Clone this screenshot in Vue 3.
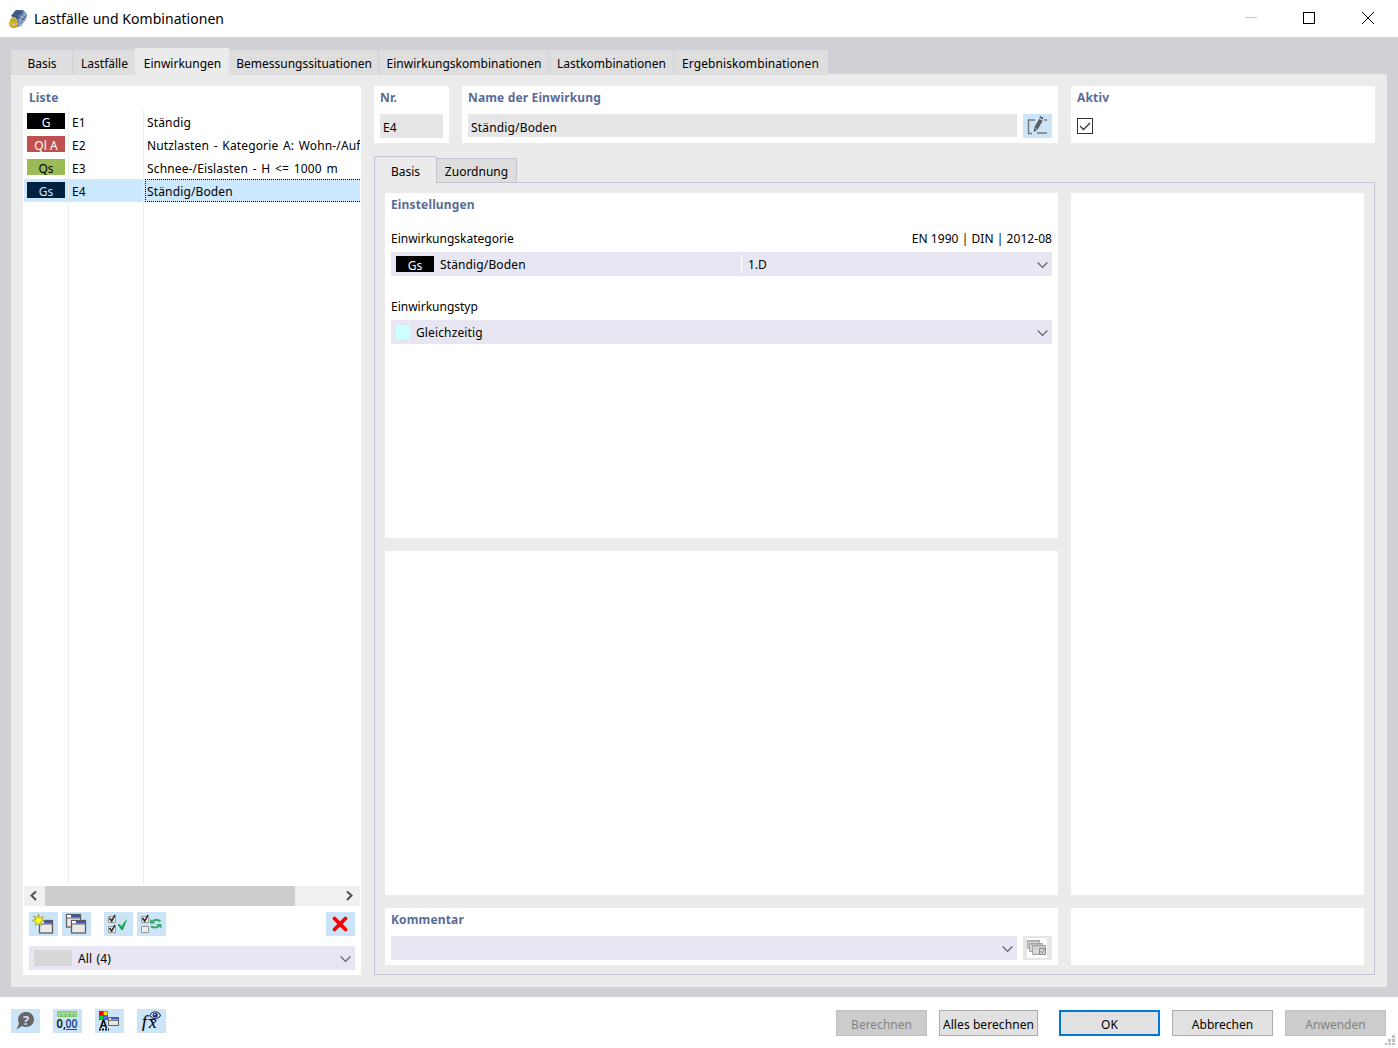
<script setup>
import { ref } from "vue";

const tabs = [
  { label: "Basis", width: 62 },
  { label: "Lastfälle", width: 62 },
  { label: "Einwirkungen", width: 94 },
  { label: "Bemessungssituationen", width: 150 },
  { label: "Einwirkungskombinationen", width: 170 },
  { label: "Lastkombinationen", width: 125 },
  { label: "Ergebniskombinationen", width: 154 },
];
const activeTab = ref(2);

const actions = [
  { tag: "G", nr: "E1", name: "Ständig", bg: "#000000", fg: "#ffffff" },
  { tag: "Ql A", nr: "E2", name: "Nutzlasten - Kategorie A: Wohn-/Auf", bg: "#c0504d", fg: "#ffffff" },
  { tag: "Qs", nr: "E3", name: "Schnee-/Eislasten - H <= 1000 m", bg: "#9bbb59", fg: "#000000" },
  { tag: "Gs", nr: "E4", name: "Ständig/Boden", bg: "#00213f", fg: "#cce8ff" },
];
const selected = ref(3);
const active = ref(true);
</script>

<template>
  <div class="window">
    <header class="titlebar">
      <svg class="app-icon" width="20" height="20" viewBox="0 0 20 20">
        <path d="M3 7 L8 1 L15 1 L19 5 L18 10 L13 17 L9 18 L9 11 Z" fill="#6580b4" />
        <path d="M3 7 L8 1 L15 1 L10 7 L9 11 L6 8 Z" fill="#47618f" />
        <path d="M12 8 L16 4 L19 5 L18 10 L13 17 L10 16 Z" fill="#9dafd0" />
        <path d="M6 4l9 1M5 6l7 3M11 2l-4 6M14 2l-5 8M18 6l-6 9M12 9l5 2M14 6l4 3" stroke="#344b7b" stroke-width=".7" />
        <path d="M8 9.800C5.500 8.800 2.800 11 2.800 14.300c0 4.200 6 4 6 .7 0-3-4.500-3-5.800-.3" fill="none" stroke="#9a7911" stroke-width="3" />
        <path d="M8 9.800C5.500 8.800 2.800 11 2.800 14.300c0 4.200 6 4 6 .7 0-3-4.500-3-5.800-.3" fill="none" stroke="#e4bd31" stroke-width="1.800" />
      </svg>
      <h1>Lastfälle und Kombinationen</h1>
      <svg class="window-controls" width="140" height="20" viewBox="0 0 140 20" fill="none" shape-rendering="crispEdges">
        <path d="M3 9.500h12" stroke="#c8c8c8" />
        <path d="M61.500 4.500h11v11h-11z" stroke="#000" />
        <path d="M120 4l12 12M132 4l-12 12" stroke="#000" shape-rendering="auto" />
      </svg>
    </header>

    <main class="workspace">
      <nav class="main-tabs">
        <button
          v-for="(tab, i) in tabs"
          :key="tab.label"
          type="button"
          class="main-tab"
          :class="{ active: i === activeTab }"
          :style="{ width: tab.width + 'px' }"
          @click="activeTab = i"
        >
          {{ tab.label }}
        </button>
      </nav>

      <div class="page">
        <aside class="panel list-panel">
          <h2>Liste</h2>
          <div class="list">
            <div
              v-for="(item, i) in actions"
              :key="item.nr"
              class="row"
              :class="{ selected: i === selected }"
              @click="selected = i"
            >
              <span class="cell tag-cell">
                <span class="tag" :style="{ background: item.bg, color: item.fg }">{{ item.tag }}</span>
              </span>
              <span class="cell nr-cell">{{ item.nr }}</span>
              <span class="cell name-cell">{{ item.name }}</span>
            </div>
            <div class="row filler">
              <span class="cell tag-cell"></span>
              <span class="cell nr-cell"></span>
              <span class="cell name-cell"></span>
            </div>
          </div>
          <div class="scrollbar">
            <svg width="21" height="20" viewBox="0 0 21 20" fill="none">
              <path d="M12 5.500L7.500 9.500l4.500 4.500" stroke="#505050" stroke-width="2" />
            </svg>
            <div class="thumb"></div>
            <svg class="scroll-right" width="21" height="20" viewBox="0 0 21 20" fill="none">
              <path d="M8 5.500l4.500 4-4.500 4.500" stroke="#505050" stroke-width="2" />
            </svg>
          </div>
          <div class="toolbar">
            <button type="button" class="tool">
              <svg width="29" height="24" viewBox="0 0 29 24">
                <rect x="10.500" y="8.500" width="13" height="12.500" fill="#e9e9e9" stroke="#5c5c5c" stroke-width="1.300" />
                <path d="M11 9h4v2h-4z" fill="#fff" />
                <path d="M15 9h8v2.500h-8z" fill="#3f51bd" />
                <path d="M10 12h14" stroke="#626262" />
                <path d="M9.500 2l1.200 4 3.800-1.500-2 3.300 3 1.200-3.800 1 .8 3.500-3-2.200-3 2.200.7-3.500-3.700-1.500 3.500-1.200L4.500 4l4 1.800z" fill="#ffff20" stroke="#9c9a25" stroke-width=".8" />
              </svg>
            </button>
            <button type="button" class="tool">
              <svg width="29" height="24" viewBox="0 0 29 24">
                <g v-for="n in 2" :key="n" :transform="n === 1 ? 'translate(4 2)' : 'translate(9 8)'">
                  <rect x=".5" y=".5" width="14" height="12.500" fill="#e9e9e9" stroke="#5c5c5c" stroke-width="1.300" />
                  <path d="M1 1h4v2H1z" fill="#fff" />
                  <path d="M5 1h9v2.500H5z" fill="#3f51bd" />
                  <path d="M0 4h15" stroke="#626262" />
                </g>
              </svg>
            </button>
            <button type="button" class="tool gap">
              <svg width="29" height="24" viewBox="0 0 29 24" fill="none">
                <path d="M4.500 4.500h7v6h-7zM4.500 14.500h7v6h-7z" fill="#eee" stroke="#999" />
                <path d="M5.500 6l2.200 3L11 3M5.500 16l2.200 3L11 13" stroke="#222" stroke-width="1.500" />
                <path d="M13.500 12.500L15.500 12l2.300 2.500C19 11.500 21 8.500 23.500 7c-1.500 3-3 6.500-4.500 11h-1.500z" fill="#12a64b" />
              </svg>
            </button>
            <button type="button" class="tool">
              <svg width="29" height="24" viewBox="0 0 29 24" fill="none">
                <path d="M4.500 4.500h7v6h-7zM4.500 14.500h7v6h-7z" fill="#eee" stroke="#999" />
                <path d="M5.500 6l2.200 3L11 3" stroke="#222" stroke-width="1.500" />
                <path d="M23.500 9.500C21 7.500 18 7.500 15.500 9.500M14 14.500c3 1.500 6 1.300 8.500-.7" stroke="#37a966" stroke-width="2" />
                <path d="M13 7v4.500h5.500zM24.500 16.500V12H19z" fill="#37a966" />
              </svg>
            </button>
            <button type="button" class="tool delete">
              <svg width="29" height="24" viewBox="0 0 29 24">
                <path d="M8.500 6.500l11 11M19.500 6.500l-11 11" stroke="#fb0000" stroke-width="3.800" stroke-linecap="round" />
              </svg>
            </button>
          </div>
          <div class="combo list-filter">
            <span class="filter-swatch"></span>
            <span class="combo-text">All (4)</span>
            <svg class="chevron" width="11" height="8" viewBox="0 0 11 8"><path d="M.7 1.500l4.800 4.800 4.800-4.800" /></svg>
          </div>
        </aside>

        <section class="details">
          <div class="head">
            <div class="panel nr-panel">
              <h2>Nr.</h2>
              <div class="field">E4</div>
            </div>
            <div class="panel name-panel">
              <h2>Name der Einwirkung</h2>
              <div class="field-line">
                <div class="field name-field">Ständig/Boden</div>
                <button type="button" class="tool">
                  <svg width="29" height="24" viewBox="0 0 29 24" fill="none">
                    <path d="M12 6H5.500v13.500H9M14 19h10M21 6h3" stroke="#777" stroke-width="1.400" />
                    <path d="M18 5.500l-5 9" stroke="#5c5c5c" stroke-width="4" />
                    <path d="M11 14l3.200 1.700-3.400 2.600z" fill="#5c5c5c" />
                    <path d="M16.800 2.800l3.300 1.800" stroke="#5c5c5c" stroke-width="2" />
                    <path d="M16 4.300l3.500 2" stroke="#cce4f7" stroke-width=".8" />
                  </svg>
                </button>
              </div>
            </div>
            <div class="panel active-panel">
              <h2>Aktiv</h2>
              <button type="button" class="checkbox" @click="active = !active">
                <svg v-if="active" width="14" height="14" viewBox="0 0 14 14" fill="none">
                  <path d="M2 7l3.500 3.500L12 4" stroke="#333" stroke-width="1.300" />
                </svg>
              </button>
            </div>
          </div>

          <nav class="sub-tabs">
            <button type="button" class="sub-tab current">Basis</button>
            <button type="button" class="sub-tab">Zuordnung</button>
          </nav>

          <div class="frame">
            <div class="panel settings">
              <h2>Einstellungen</h2>
              <div class="label-line">
                <span>Einwirkungskategorie</span>
                <span class="norm">EN 1990 | DIN | 2012-08</span>
              </div>
              <div class="combo category">
                <span class="tag">Gs</span>
                <span class="combo-text category-name">Ständig/Boden</span>
                <span class="category-code">1.D</span>
                <svg class="chevron" width="11" height="8" viewBox="0 0 11 8"><path d="M.7 1.500l4.800 4.800 4.800-4.800" /></svg>
              </div>
              <div class="label-line type-label">Einwirkungstyp</div>
              <div class="combo type">
                <span class="type-swatch"></span>
                <span class="combo-text">Gleichzeitig</span>
                <svg class="chevron" width="11" height="8" viewBox="0 0 11 8"><path d="M.7 1.500l4.800 4.800 4.800-4.800" /></svg>
              </div>
            </div>
            <div class="panel middle"></div>
            <div class="panel preview"></div>
            <div class="panel comment">
              <h2>Kommentar</h2>
              <div class="field-line">
                <div class="combo comment-combo">
                  <svg class="chevron" width="11" height="8" viewBox="0 0 11 8"><path d="M.7 1.500l4.800 4.800 4.800-4.800" /></svg>
                </div>
                <button type="button" class="tool disabled">
                  <svg width="29" height="24" viewBox="0 0 29 24">
                    <path d="M4 2h20v20H4z" fill="#fff" />
                    <g stroke="#a5a5a5" fill="#d6d6d6">
                      <path d="M4.500 4.500h12v8h-12z" />
                      <path d="M6.500 7.500h13v8h-13z" />
                      <path d="M9.500 9.500h13v9h-13z" />
                    </g>
                    <path d="M4 5h13M6 8h14M9 10h14" stroke="#a5a5a5" />
                    <path d="M16.500 12.500h6v6h-6zM17.500 15l1.500 2 3-4" fill="none" stroke="#8c8c8c" />
                  </svg>
                </button>
              </div>
            </div>
            <div class="panel corner"></div>
          </div>
        </section>
      </div>
    </main>

    <footer class="footer">
      <div class="footer-tools">
        <button type="button" class="tool">
          <svg width="29" height="24" viewBox="0 0 29 24">
            <path d="M15 3c5 0 8 3.500 8 7.500 0 4.500-3.500 7.500-8 7.500-1.500 0-2.800-.3-4-1l-5.500 3.500L8 14.500c-.7-1.200-1-2.500-1-4C7 6.500 10.500 3 15 3z" fill="#666" />
            <text x="15.200" y="15.500" text-anchor="middle" class="help-mark">?</text>
          </svg>
        </button>
        <button type="button" class="tool">
          <svg width="29" height="24" viewBox="0 0 29 24">
            <path d="M4.500 2.500h19v5h-19z" fill="#98dc87" stroke="#85cb76" />
            <path d="M8.500 5v3M12.500 5v3M16.500 5v3M20.500 5v3" stroke="#6cae62" />
            <text x="3.500" y="18.500" class="decimal" textLength="9.500" lengthAdjust="spacingAndGlyphs">0,</text>
            <text x="12.500" y="18.500" class="decimal blue" textLength="12" lengthAdjust="spacingAndGlyphs">00</text>
            <path d="M13 20.500h11" stroke="#244a91" />
          </svg>
        </button>
        <button type="button" class="tool">
          <svg width="29" height="24" viewBox="0 0 29 24">
            <path d="M4 2h9v9H4z" fill="#555" />
            <path d="M4.500 2.500h3.700v3.700H4.500z" fill="#f00" />
            <path d="M8.700 2.500h3.800v3.700H8.700z" fill="#ffe600" />
            <path d="M4.500 6.700h3.700v3.800H4.500z" fill="#00d932" />
            <path d="M8.700 6.700h3.800v3.800H8.700z" fill="#4961ff" />
            <text x="4.500" y="19" class="letter">A</text>
            <path d="M4 20.500h10" stroke="#111" stroke-width="2" stroke-dasharray="2 1" />
            <path d="M13.500 8.500h10v8h-10z" fill="#e5e5e5" stroke="#626262" />
            <path d="M16 9.500h7.500" stroke="#3f51bd" stroke-width="2" />
            <path d="M14 11.500h9" stroke="#777" />
          </svg>
        </button>
        <button type="button" class="tool">
          <svg width="29" height="24" viewBox="0 0 29 24">
            <text x="5" y="18" class="formula">f</text>
            <text x="12" y="19" class="formula">x</text>
            <path d="M11.500 10.500h7" stroke="#111" />
            <path d="M13 6.500c2.500-5 8-5 10.500 0-2.500 4-8 4-10.500 0z" fill="#fff" stroke="#243d82" stroke-width="1.200" />
            <circle cx="18.200" cy="6.200" r="2.600" fill="#23377d" />
            <circle cx="17.700" cy="5.500" r=".8" fill="#dbe7ff" />
          </svg>
        </button>
      </div>
      <div class="dialog-buttons">
        <button type="button" class="push calc" disabled>Berechnen</button>
        <button type="button" class="push calc-all">Alles berechnen</button>
        <button type="button" class="push ok">OK</button>
        <button type="button" class="push">Abbrechen</button>
        <button type="button" class="push" disabled>Anwenden</button>
      </div>
      <svg class="grip" width="11" height="11" viewBox="0 0 11 11" fill="#bfbfbf">
        <path d="M8 0h3v3H8zM4 4h3v3H4zM8 4h3v3H8zM1 8h2v2H1zM4 8h3v2H4zM8 8h3v2H8z" />
      </svg>
    </footer>
  </div>
</template>

<style>
body {
  margin: 0;
  overflow: hidden;
}
</style>

<style scoped>
.window {
  width: 1398px;
  height: 1048px;
  display: flex;
  flex-direction: column;
  overflow: hidden;
  position: relative;
  background: #fff;
  color: #000;
  font-family: "Noto Sans", "Open Sans", sans-serif;
  font-size: 12px;
  line-height: 16px;
}

.window * {
  box-sizing: border-box;
}

button {
  font: inherit;
  color: inherit;
  padding: 0;
  margin: 0;
  border: 0;
  border-radius: 0;
}

svg {
  display: block;
  flex: none;
}

h1,
h2 {
  margin: 0;
}

.titlebar {
  height: 37px;
  flex: none;
  display: flex;
  align-items: center;
  padding-left: 8px;
}

.titlebar h1 {
  margin-left: 6px;
  font-size: 14px;
  font-weight: 400;
  letter-spacing: 0.03px;
}

.window-controls {
  margin-left: auto;
  margin-right: 16px;
  margin-top: -1px;
}

.workspace {
  height: 960px;
  flex: none;
  padding: 11px 11px 10px;
  background: #d1d0d6;
}

.main-tabs {
  display: flex;
  align-items: flex-end;
  height: 27px;
  position: relative;
}

.main-tab {
  height: 25px;
  padding: 3px 0 0 1px;
  background: #dedede;
  border-right: 1px solid #d1d0d6;
  white-space: nowrap;
}

.main-tab.active {
  height: 27px;
  padding-top: 5px;
  background: #ebebeb;
  border-right: 0;
}

.main-tab:nth-child(2),
.main-tab:last-child {
  border-right: 0;
}

.main-tab:last-child {
  padding-left: 0;
  padding-right: 1px;
  letter-spacing: 0.08px;
}

.page {
  height: 913px;
  margin-top: -1px;
  padding: 12px;
  display: flex;
  gap: 13px;
  background: #ebebeb;
}

.panel {
  background: #fff;
}

.panel h2 {
  height: 24px;
  padding: 4px 6px 0;
  color: #5a6b98;
  font-size: 12px;
  font-weight: 700;
  line-height: 16px;
  letter-spacing: 0.15px;
}

.list-panel {
  width: 338px;
  height: 889px;
  padding: 0 1px;
  display: flex;
  flex-direction: column;
}

.list-panel h2 {
  padding-left: 5px;
}

.list {
  height: 775px;
  display: flex;
  flex-direction: column;
}

.row {
  display: flex;
  height: 23px;
  flex: none;
}

.row.filler {
  flex: 1;
}

.cell {
  display: flex;
  align-items: center;
  border-right: 1px solid #ebebeb;
  padding-top: 2px;
}

.tag-cell {
  width: 45px;
  padding: 0 0 1px 3px;
}

.tag {
  width: 38px;
  height: 16px;
  text-align: center;
  line-height: 19px;
}

.nr-cell {
  width: 75px;
  padding-left: 3px;
}

.name-cell {
  flex: 1;
  min-width: 0;
  display: block;
  margin-left: 1px;
  padding: 5px 0 0 2px;
  border-right: 0;
  line-height: 16px;
  letter-spacing: 0.14px;
  word-spacing: 1.4px;
  white-space: nowrap;
  overflow: hidden;
}

.row.selected {
  background: #cce8ff;
}

.row.selected .name-cell {
  padding: 4px 0 0 1px;
  border: 1px dotted #000;
  border-right: 0;
}

.scrollbar {
  height: 20px;
  margin-top: 1px;
  display: flex;
  background: #f0f0f0;
}

.thumb {
  width: 250px;
  background: #cdcdcd;
}

.scroll-right {
  margin-left: auto;
}

.toolbar {
  display: flex;
  gap: 4px;
  height: 24px;
  margin: 6px 5px 0;
}

.tool {
  width: 29px;
  height: 24px;
  flex: none;
  background: #cce4f7;
}

.tool.gap {
  margin-left: 9px;
}

.tool.delete {
  margin-left: auto;
}

.tool.disabled {
  background: #e6e6e6;
}

.combo {
  height: 24px;
  display: flex;
  align-items: center;
  padding: 0 4px 0 5px;
  background: #e7e6f2;
}

.combo-text {
  padding-top: 2px;
  letter-spacing: 0.13px;
}

.chevron {
  margin-left: auto;
  margin-top: 1px;
  fill: none;
  stroke: #606060;
  stroke-width: 1.2;
}

.list-filter {
  margin: 10px 5px 0;
}

.filter-swatch {
  width: 38px;
  height: 16px;
  margin-right: 6px;
  background: #d7d7d7;
}

.list-filter .combo-text {
  word-spacing: 1px;
}

.details {
  width: 1001px;
  display: flex;
  flex-direction: column;
}

.head {
  height: 57px;
  display: flex;
  gap: 13px;
}

.nr-panel {
  width: 75px;
}

.name-panel {
  width: 596px;
}

.active-panel {
  flex: 1;
}

.field {
  height: 24px;
  margin: 4px 6px 0;
  padding: 6px 3px 0;
  background: #e6e6e6;
  letter-spacing: 0.16px;
}

.field-line {
  display: flex;
  justify-content: space-between;
  margin: 4px 6px 0;
}

.name-field {
  width: 549px;
  height: 23px;
  margin: 0;
}

.checkbox {
  display: block;
  width: 16px;
  height: 16px;
  margin: 8px 0 0 6px;
  border: 1px solid #333;
  background: #fff;
}

.sub-tabs {
  height: 27px;
  margin-top: 13px;
  display: flex;
  align-items: flex-end;
  position: relative;
}

.sub-tab {
  width: 80px;
  height: 25px;
  padding-top: 2px;
  border: 1px solid #c5c4d0;
  border-left: 0;
  background: #dedede;
}

.sub-tab.current {
  width: 63px;
  height: 27px;
  padding-top: 3px;
  border-left: 1px solid #c5c4d0;
  border-bottom: 0;
  background: #ebebeb;
}

.frame {
  height: 793px;
  margin-top: -1px;
  padding: 10px;
  display: grid;
  grid-template-columns: 673px 293px;
  grid-template-rows: 345px 344px 57px;
  gap: 13px;
  border: 1px solid #c5c4d0;
}

.settings {
  grid-area: 1 / 1;
}

.middle {
  grid-area: 2 / 1;
}

.preview {
  grid-area: 1 / 2 / 3 / 3;
}

.comment {
  grid-area: 3 / 1;
}

.corner {
  grid-area: 3 / 2;
}

.label-line {
  display: flex;
  justify-content: space-between;
  height: 16px;
  margin: 14px 6px 5px;
}

.norm {
  letter-spacing: 0.05px;
}

.category,
.type {
  margin: 0 6px;
}

.category .tag {
  background: #000;
  color: #fff;
  margin-right: 6px;
}

.category-name {
  width: 301px;
}

.category-code {
  height: 18px;
  padding-left: 6px;
  border-left: 1px solid #fff;
  line-height: 20px;
}

.type-label {
  margin-top: 23px;
}

.type-swatch {
  width: 14px;
  height: 14px;
  margin-right: 6px;
  background: #ccffff;
}

.comment-combo {
  width: 626px;
}

.footer {
  height: 51px;
  display: flex;
  justify-content: space-between;
  padding: 12px 12px 0 11px;
}

.footer-tools {
  display: flex;
  gap: 13px;
}

.dialog-buttons {
  display: flex;
  gap: 12px;
  margin-top: 1px;
}

.push {
  width: 101px;
  height: 26px;
  padding-top: 4px;
  border: 1px solid #adadad;
  background: #e1e1e1;
  white-space: nowrap;
}

.push:disabled {
  border-color: #bfbfbf;
  background: #ccc;
  color: #838383;
}

.push.calc {
  width: 91px;
}

.push.calc-all {
  width: 99px;
  margin-right: 9px;
  letter-spacing: 0.08px;
}

.push.ok {
  border: 2px solid #0078d7;
}

.grip {
  position: absolute;
  right: 3px;
  bottom: 2px;
}

.help-mark {
  font: bold 13px "Noto Sans", sans-serif;
  fill: #cce4f7;
}

.decimal {
  font: 600 12px "Noto Sans", sans-serif;
  fill: #111;
}

.decimal.blue {
  fill: #244a91;
}

.letter {
  font: bold 11px "Liberation Sans", sans-serif;
}

.formula {
  font: italic 17px "Liberation Serif", serif;
  stroke: #000;
  stroke-width: 0.2px;
}
</style>
